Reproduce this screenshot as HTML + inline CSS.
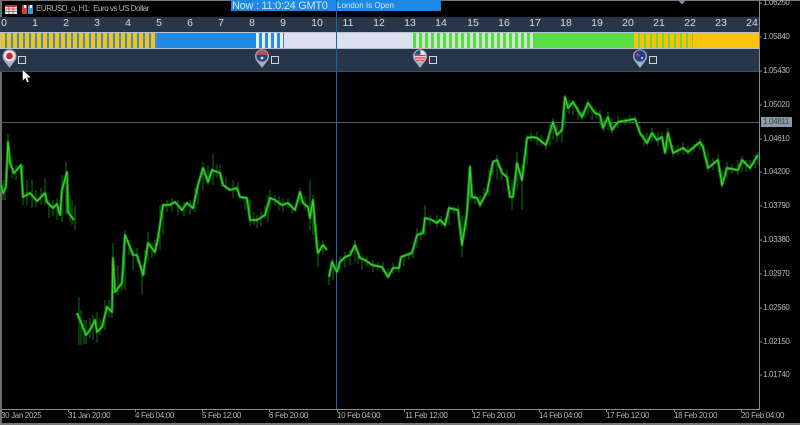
<!DOCTYPE html>
<html><head><meta charset="utf-8"><style>
html,body{margin:0;padding:0;background:#000}
#p{position:relative;width:800px;height:425px;overflow:hidden;background:#000;font-family:"Liberation Sans",sans-serif;filter:blur(.35px)}
#p div{position:absolute}
.t{font-size:8px;color:#b4b4b4;white-space:nowrap;line-height:10px;letter-spacing:-.34px}
.n{font-size:10.5px;color:#d5dbe3;line-height:12px;top:17px;width:20px;text-align:center}
.s{top:33px;height:15px}
.q{width:6px;height:6px;border:1px solid #cfd3d9;top:56px}
</style></head><body><div id="p">
<div style="left:0;top:0;width:800px;height:1px;background:#777"></div>
<div style="left:0;top:0;width:1.500px;height:423px;background:#6e6e6e"></div>
<div style="left:0;top:423px;width:800px;height:2px;background:#777"></div>
<div style="left:0;top:17px;width:759px;height:54px;background:#27364a"></div>
<div style="left:0;top:71px;width:759px;height:1px;background:#3d5066"></div>
<div style="left:0;top:32px;width:759px;height:17px;background:#b9c2cc"></div>

<div class="s" style="left:1px;width:156px;background:repeating-linear-gradient(90deg,#f4c314 0 4px,#3f8fd0 4px 6px)"></div>
<div class="s" style="left:157px;width:99px;background:#1e88e5"></div>
<div class="s" style="left:256px;width:28px;background:repeating-linear-gradient(90deg,#e6ecf5 0 3px,#2a8ce6 3px 6px)"></div>
<div class="s" style="left:284px;width:129px;background:#dbe0ee"></div>
<div class="s" style="left:413px;width:123px;background:repeating-linear-gradient(90deg,#57dc40 0 3px,#cfe6d2 3px 6px)"></div>
<div class="s" style="left:536px;width:98px;background:#5ade46"></div>
<div class="s" style="left:634px;width:59px;background:repeating-linear-gradient(90deg,#f6c20f 0 4px,#74d63a 4px 6px)"></div>
<div class="s" style="left:693px;width:66px;background:#fcc30f"></div>

<div class="n" style="left:-6px">0</div><div class="n" style="left:25px">1</div><div class="n" style="left:56px">2</div><div class="n" style="left:87px">3</div><div class="n" style="left:118px">4</div><div class="n" style="left:149px">5</div><div class="n" style="left:180px">6</div><div class="n" style="left:211px">7</div><div class="n" style="left:242px">8</div><div class="n" style="left:273px">9</div><div class="n" style="left:307px">10</div><div class="n" style="left:338px">11</div><div class="n" style="left:369px">12</div><div class="n" style="left:400px">13</div><div class="n" style="left:431px">14</div><div class="n" style="left:463px">15</div><div class="n" style="left:494px">16</div><div class="n" style="left:525px">17</div><div class="n" style="left:556px">18</div><div class="n" style="left:587px">19</div><div class="n" style="left:618px">20</div><div class="n" style="left:649px">21</div><div class="n" style="left:680px">22</div><div class="n" style="left:711px">23</div><div class="n" style="left:742px">24</div>

<div class="q" style="left:18px"></div><div class="q" style="left:271px"></div><div class="q" style="left:429px"></div><div class="q" style="left:649px"></div>

<div style="left:231px;top:0;width:210px;height:11px;background:#1e88e5"></div>
<div style="left:232px;top:0;font-size:11px;line-height:12px;color:#cfe6fb;white-space:nowrap;letter-spacing:-.28px">Now : 11:0:24 GMT0</div>
<div style="left:337px;top:0;font-size:8px;line-height:11px;color:#cfe6fb;white-space:nowrap">London Is Open</div>

<svg style="position:absolute;left:0;top:0" width="800" height="425" viewBox="0 0 800 425">
<rect x="5" y="5" width="12" height="9" fill="#e8e8ef"/><path d="M5 5h12v2H5z" fill="#b5373b"/><path d="M5 9h12M5 11.500h12M9 7v7M13 7v7" stroke="#b5373b" stroke-width=".8"/>
<rect x="22" y="5" width="5" height="9" fill="#d8403a"/><rect x="28" y="5" width="5" height="9" fill="#3b97dd"/><rect x="24" y="5" width="2" height="3" fill="#fff"/><rect x="30" y="5" width="2" height="3" fill="#fff"/>

<g id="pins">
<path d="M9.500 68 L3.500 60 A7 7 0 1 1 15.500 60 Z" fill="#a9aeb5"/><circle cx="9.500" cy="56" r="5.500" fill="#e4e6ea"/><circle cx="9.500" cy="56" r="3.300" fill="#d3202c"/>
<path d="M262 68 L256 60 A7 7 0 1 1 268 60 Z" fill="#a9aeb5"/><circle cx="262" cy="56" r="5.600" fill="#27457f"/><path d="M256.500 55 A5.600 5.600 0 0 1 267.500 55 Z" fill="#c8444a"/><circle cx="262" cy="58" r="1.400" fill="#dfe6f0"/>
<path d="M420 68 L414 60 A7 7 0 1 1 426 60 Z" fill="#a9aeb5"/><circle cx="420" cy="56" r="5.600" fill="#ece6e6"/><path d="M414.700 55.500h10.600M414.900 58h10.200M416 60.300h8" stroke="#d23a3e" stroke-width="1.200"/><path d="M414.500 55 A5.600 5.600 0 0 1 420.500 50.400 V54.500 Z" fill="#2b4a8c"/>
<path d="M640 68 L634 60 A7 7 0 1 1 646 60 Z" fill="#a9aeb5"/><circle cx="640" cy="56" r="5.600" fill="#1c3f95"/><circle cx="638" cy="55" r="1.800" fill="#c43a46"/><circle cx="642" cy="58" r="1" fill="#e3e6f0"/>
</g>

<path d="M336.500 0V409" stroke="#1c64b4" stroke-width="1"/>
<path d="M2 122.500H759" stroke="#585858" stroke-width="1"/>

<g fill="none" stroke="#0a780a" stroke-width="1">
<path d="M3 180V200M8 133V170M5 180V200M12 155V178M16 165V180M23 165V205M27 180V205M32 180V208M36 190V207M41 188V205M45 178V205M49 200V218M53 200V216M57 198V220M62 175V222M66 162V215M70 195V222M72 200V225M75 205V230"/>
<path d="M79 297V345M81 310V345M84 320V344M86 320V344M90 318V338M93 315V340M97 312V343M100 318V335M105 300V330M109 300V318M112 305V318M113 243V305M118 265V295M122 270V290M125 230V290M129 240V255M133 250V270M137 248V262M142 265V295M145 250V275M148 232V262M152 242V258M155 240V255M160 205V250M163 205V235M167 200V212M172 198V212M178 200V215M184 202V216M190 200V215M195 188V212M198 180V205M203 162V190M208 165V185M213 154V185M217 165V178M220 165V180M226 178V190M233 180V198M238 182V196M245 196V210M250 200V226M254 212V225M257 215V228M261 212V226M268 195V222"/>
<path d="M265 205V218M270 190V212M275 195V206M279 196V210M283 198V212M288 198V208M292 204V214M300 188V205M305 196V210M310 180V230M313 195V235M318 240V267M323 240V255M329 270V285M333 258V280M340 256V270M345 252V268M350 250V265M355 240V262M358 250V264M362 255V270M367 256V266M373 260V272M378 262V270M383 262V272M388 268V279M393 263V274M399 262V272M404 254V266M409 252V260M413 246V258M417 228V248M421 230V240M425 205V236M430 215V226M437 215V228M441 216V226M445 218V228M449 205V225M454 206V214M458 205V215M462 215V257M467 200V230M470 165V200M475 194V204M480 195V208M484 188V200M489 170V196M493 160V175M497 155V180M502 168V180M507 170V185M512 180V210M517 152V190M522 165V210M527 135V165M531 132V142"/>
<path d="M537 132V145M541 135V146M546 140V150M550 124V146M553 118V140M557 125V142M562 125V143M565 95V125M569 100V114M573 100V115M578 106V120M582 110V120M585 106V118M588 100V115M592 106V120M596 108V118M600 110V125M604 118V132M608 112V130M612 118V134M618 116V128M625 118V125M630 116V124M635 116V122M640 125V136M644 134V146M647 132V146M652 128V142M658 132V146M662 132V142M668 128V150M673 145V157M678 145V155M683 142V155M688 146V155M694 144V152M700 138V150M704 144V158M708 150V172M713 158V170M718 155V172M722 170V188M727 162V178M732 164V174M738 160V175M742 156V172M746 160V172M750 160V170M755 155V168M758 152V165"/>
</g>

<g fill="none" stroke="#0d900d" stroke-width="2.800" stroke-linejoin="round">
<path d="M1 185L3 193L6 187L8 142L10 163L14 173L21 165L23 197L30 193L37 201L45 193L47 202L53 208L57 204L60 215L62 190L67 172L68 212L74 220"/>
<path d="M77 313L80 320L86 335L90 330L95 320L97 332L102 327L107 307L112 312L113 258L115 292L122 283L125 235L130 247L133 255L137 255L143 275L148 243L155 252L158 238L163 205L170 205L175 202L182 210L187 203L193 208L198 185L203 168L208 182L212 170L220 173L223 185L230 190L237 188L240 197L247 198L250 220L257 220L265 215L270 198L275 200L282 205L288 203L295 210L300 192L303 203L308 207L310 218L313 200L317 247L318 253L323 245L327 250"/>
<path d="M329 277L332 262L337 272L340 262L345 257L350 255L355 245L360 258L365 260L372 265L382 267L388 277L393 268L399 268L401 257L412 253L417 235L423 233L425 218L432 220L437 223L440 220L445 225L449 208L458 210L462 245L467 213L470 167L472 197L477 198L480 205L487 192L493 162L497 160L502 173L507 177L510 197L513 197L517 163L522 180L527 138L532 137L537 138L546 145L553 122L557 135L562 130L565 97L568 108L573 102L582 117L588 103L595 113L600 115L603 128L608 117L612 130L618 122L635 119L640 133L647 143L652 133L657 140L662 137L665 153L668 133L673 153L683 148L688 152L700 142L703 147L708 168L718 160L722 185L727 168L738 170L742 160L750 168L758 155"/>
</g>
<g fill="none" stroke="#52d546" stroke-width=".9" stroke-linejoin="round">
<path d="M1 185L3 193L6 187L8 142L10 163L14 173L21 165L23 197L30 193L37 201L45 193L47 202L53 208L57 204L60 215L62 190L67 172L68 212L74 220"/>
<path d="M77 313L80 320L86 335L90 330L95 320L97 332L102 327L107 307L112 312L113 258L115 292L122 283L125 235L130 247L133 255L137 255L143 275L148 243L155 252L158 238L163 205L170 205L175 202L182 210L187 203L193 208L198 185L203 168L208 182L212 170L220 173L223 185L230 190L237 188L240 197L247 198L250 220L257 220L265 215L270 198L275 200L282 205L288 203L295 210L300 192L303 203L308 207L310 218L313 200L317 247L318 253L323 245L327 250"/>
<path d="M329 277L332 262L337 272L340 262L345 257L350 255L355 245L360 258L365 260L372 265L382 267L388 277L393 268L399 268L401 257L412 253L417 235L423 233L425 218L432 220L437 223L440 220L445 225L449 208L458 210L462 245L467 213L470 167L472 197L477 198L480 205L487 192L493 162L497 160L502 173L507 177L510 197L513 197L517 163L522 180L527 138L532 137L537 138L546 145L553 122L557 135L562 130L565 97L568 108L573 102L582 117L588 103L595 113L600 115L603 128L608 117L612 130L618 122L635 119L640 133L647 143L652 133L657 140L662 137L665 153L668 133L673 153L683 148L688 152L700 142L703 147L708 168L718 160L722 185L727 168L738 170L742 160L750 168L758 155"/>
</g>

<path d="M759.500 0V409.500H1" fill="none" stroke="#8a8a8a" stroke-width="1"/>
<path d="M759 3h3M759 37h3M759 71h3M759 105h3M759 139h3M759 172h3M759 206h3M759 240h3M759 274h3M759 308h3M759 342h3M759 375h3" stroke="#8a8a8a"/>
<path d="M1.500 410v2M68.500 410v2M135.500 410v2M202.500 410v2M269.500 410v2M337.500 410v2M404.500 410v2M472.500 410v2M539.500 410v2M606.500 410v2M674.500 410v2M741.500 410v2" stroke="#8a8a8a"/>
<path d="M678 0h8l-4 4.500z" fill="#7f93a6"/>
<path d="M22.500 69.500V81L25.300 78.300L27 82.500L29 81.600L27.300 77.700L31 77.500Z" fill="#fff" stroke="#111" stroke-width=".5"/>
</svg>

<div class="t" style="left:36px;top:4px;letter-spacing:-.46px">EURUSD_o, H1:&nbsp; Euro vs US Dollar</div>

<div class="t" style="left:763px;top:-2px">1.06250</div>
<div class="t" style="left:763px;top:32px">1.05840</div>
<div class="t" style="left:763px;top:66px">1.05430</div>
<div class="t" style="left:763px;top:100px">1.05020</div>
<div style="left:761px;top:117px;width:31px;height:10px;background:#8b9aac"></div>
<div class="t" style="left:763px;top:117px;color:#3c4650">1.04811</div>
<div class="t" style="left:763px;top:134px">1.04610</div>
<div class="t" style="left:763px;top:167px">1.04200</div>
<div class="t" style="left:763px;top:201px">1.03790</div>
<div class="t" style="left:763px;top:235px">1.03380</div>
<div class="t" style="left:763px;top:269px">1.02970</div>
<div class="t" style="left:763px;top:303px">1.02560</div>
<div class="t" style="left:763px;top:337px">1.02150</div>
<div class="t" style="left:763px;top:370px">1.01740</div>

<div class="t" style="left:1px;top:411px">30 Jan 2025</div>
<div class="t" style="left:68px;top:411px">31 Jan 20:00</div>
<div class="t" style="left:135px;top:411px">4 Feb 04:00</div>
<div class="t" style="left:202px;top:411px">5 Feb 12:00</div>
<div class="t" style="left:269px;top:411px">6 Feb 20:00</div>
<div class="t" style="left:337px;top:411px">10 Feb 04:00</div>
<div class="t" style="left:405px;top:411px">11 Feb 12:00</div>
<div class="t" style="left:472px;top:411px">12 Feb 20:00</div>
<div class="t" style="left:539px;top:411px">14 Feb 04:00</div>
<div class="t" style="left:606px;top:411px">17 Feb 12:00</div>
<div class="t" style="left:674px;top:411px">18 Feb 20:00</div>
<div class="t" style="left:741px;top:411px">20 Feb 04:00</div>
</div></body></html>
